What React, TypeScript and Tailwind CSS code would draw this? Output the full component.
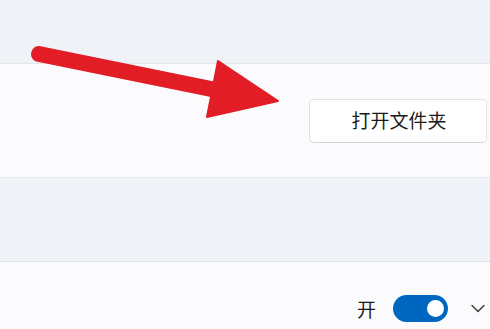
const font = { fontFamily: '"Microsoft YaHei", "Noto Sans CJK SC", sans-serif' };

function Arrow() {
  // red annotation arrow drawn over the settings page
  return (
    <svg
      className="absolute left-0 top-0 pointer-events-none"
      width="490"
      height="329"
      viewBox="0 0 490 329"
    >
      <line x1="39" y1="54" x2="226" y2="92" stroke="#e21d26" strokeWidth="16" strokeLinecap="round" />
      <polygon points="218,61 278,101 207,117" fill="#e21d26" stroke="#e21d26" strokeWidth="2" strokeLinejoin="round" />
    </svg>
  );
}

export default function App() {
  return (
    <div className="relative w-[490px] h-[329px] overflow-hidden bg-[#eff2f6] flex flex-col" style={font}>
      <div className="h-[63px] shrink-0" />
      <div className="h-[115px] shrink-0 bg-[#fbfbfd] border-y border-[#e3e5e8] flex items-center justify-end pr-[3px]">
        <button className="w-[178px] h-[44px] rounded-[5px] bg-white border border-[#e2e2e2] border-b-[#d2d2d2] text-[19px] text-[#1b1b1b] flex items-center justify-center pl-[2px]">
          打开文件夹
        </button>
      </div>
      <div className="h-[83px] shrink-0" />
      <div className="flex-1 bg-[#fbfbfd] border-t border-[#e3e5e8] flex items-start justify-end pt-[33px] pr-[5px]">
        <div className="flex items-center">
          <span className="text-[19px] text-[#1b1b1b] leading-none">开</span>
          <div className="ml-[17px] w-[55px] h-[27px] rounded-full bg-[#0067c0] flex items-center justify-end pr-[4px]">
            <div className="w-[17px] h-[17px] rounded-full bg-white" />
          </div>
          <svg className="ml-[23px]" width="14" height="9" viewBox="0 0 14 9" fill="none">
            <polyline points="1,1.5 7,7.5 13,1.5" stroke="#333" strokeWidth="1.3" strokeLinecap="round" strokeLinejoin="round" />
          </svg>
        </div>
      </div>
      <Arrow />
    </div>
  );
}
